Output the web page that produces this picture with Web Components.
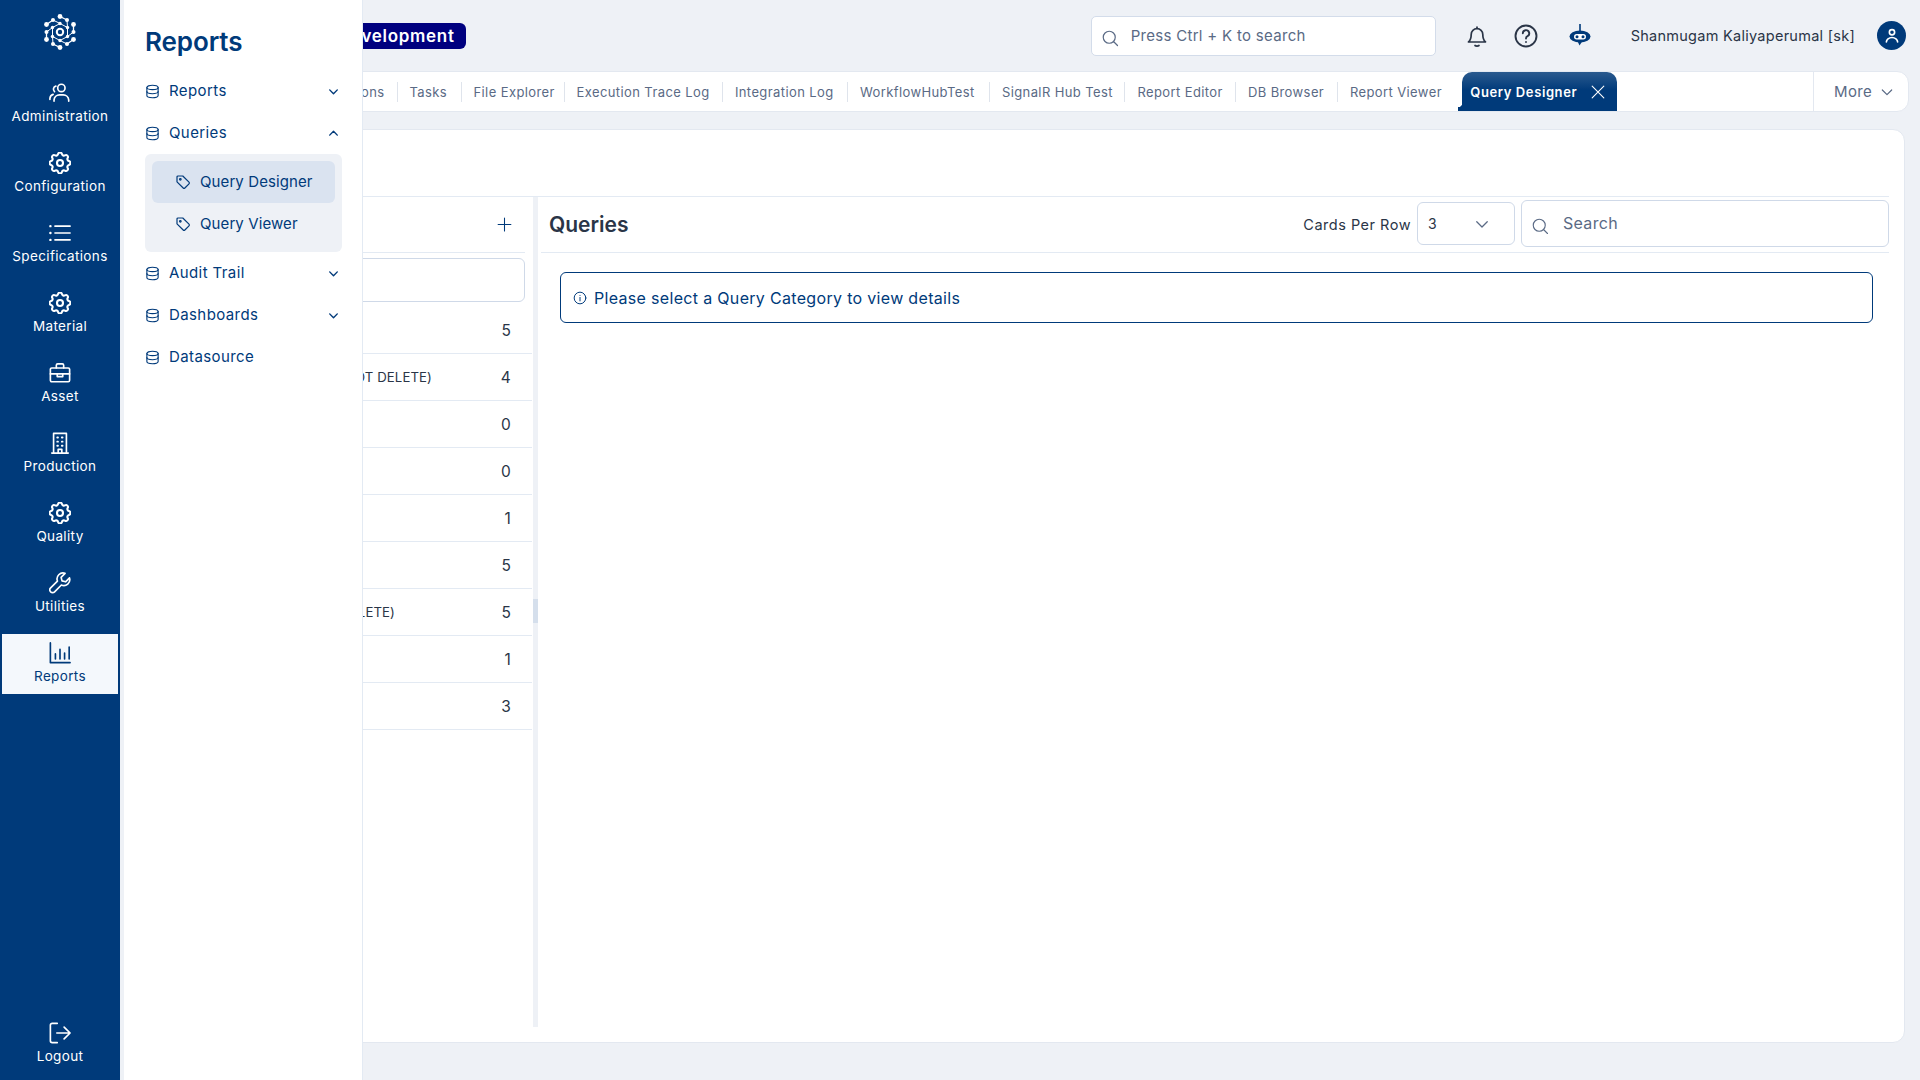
<!DOCTYPE html>
<html>
<head>
<meta charset="utf-8">
<title>Query Designer</title>
<style>
  html, body{ margin: 0; height: 100%; }
  body{
    font-family: Inter, "Noto Sans", sans-serif;
    color: #2a3547;
    background: #eef1f6;
    overflow: hidden;
  }
</style>
</head>
<body>
<app-shell>
  <app-rail slot="rail">
    <rail-item icon="users" label="Administration"></rail-item>
    <rail-item icon="gear" label="Configuration"></rail-item>
    <rail-item icon="list" label="Specifications"></rail-item>
    <rail-item icon="gear" label="Material"></rail-item>
    <rail-item icon="case" label="Asset"></rail-item>
    <rail-item icon="building" label="Production"></rail-item>
    <rail-item icon="gear" label="Quality"></rail-item>
    <rail-item icon="wrench" label="Utilities"></rail-item>
    <rail-item icon="chart" label="Reports" active></rail-item>
    <rail-item slot="bottom" icon="logout" label="Logout"></rail-item>
  </app-rail>

  <fly-menu slot="menu" heading="Reports">
    <menu-row label="Reports" chevron="down"></menu-row>
    <menu-row label="Queries" chevron="up"></menu-row>
    <sub-menu>
      <sub-row label="Query Designer" active></sub-row>
      <sub-row label="Query Viewer"></sub-row>
    </sub-menu>
    <menu-row label="Audit Trail" chevron="down"></menu-row>
    <menu-row label="Dashboards" chevron="down"></menu-row>
    <menu-row label="Datasource"></menu-row>
  </fly-menu>

  <top-bar slot="top"></top-bar>
  <tab-strip slot="tabs"></tab-strip>

  <query-page slot="page">
    <category-panel slot="left"></category-panel>
    <queries-panel slot="right"></queries-panel>
  </query-page>
</app-shell>

<script>
const ICONS = {
  users: '<circle cx="13.500" cy="6.500" r="4"/><path d="M5.500 21v-1.500a6 6 0 0 1 6-5.500h4a6 6 0 0 1 6 5.500V21"/><path d="M7.500 4.500a3.500 3.500 0 0 0-1.500 6"/><path d="M1 19v-1a5 5 0 0 1 3.500-4.500"/>',
  gear: '<path d="M10.325 4.317c.426-1.756 2.924-1.756 3.350 0a1.724 1.724 0 0 0 2.573 1.066c1.543-.94 3.310.826 2.370 2.370a1.724 1.724 0 0 0 1.065 2.572c1.756.426 1.756 2.924 0 3.350a1.724 1.724 0 0 0-1.066 2.573c.94 1.543-.826 3.310-2.370 2.370a1.724 1.724 0 0 0-2.572 1.065c-.426 1.756-2.924 1.756-3.350 0a1.724 1.724 0 0 0-2.573-1.066c-1.543.94-3.310-.826-2.370-2.370a1.724 1.724 0 0 0-1.065-2.572c-1.756-.426-1.756-2.924 0-3.350a1.724 1.724 0 0 0 1.066-2.573c-.94-1.543.826-3.310 2.370-2.370 1 .608 2.296.07 2.572-1.065z"/><circle cx="12" cy="12" r="2.600"/>',
  list: '<path d="M6.500 4.500H23M6.500 12H23M6.500 19.500H23"/><path d="M1.500 4.500h.1M1.500 12h.1M1.500 19.500h.1" stroke-width="2.600"/>',
  case: '<rect x="1.500" y="6.500" width="21" height="15" rx="1.500"/><path d="M8 6.500V3.500A1.500 1.500 0 0 1 9.500 2h5A1.500 1.500 0 0 1 16 3.500V6.500"/><path d="M1.500 13h21M9 13v3h6v-3"/>',
  building: '<path d="M5 23V1.500h14V23M3 23h18M10 23v-4h4v4"/><path d="M9 6h.8M14 6h.8M9 10.500h.8M14 10.500h.8M9 15h.8M14 15h.8" stroke-width="2"/>',
  wrench: '<path d="M22.400 6.400l-4.300 4.300-3.900-1-1-3.900 4.300-4.300a6.500 6.500 0 0 0-8.300 8.400l-7.400 7.400a3 3 0 1 0 4.300 4.300l7.400-7.400a6.500 6.500 0 0 0 8.900-7.800z"/>',
  chart: '<path d="M1.500 1v21.500H23"/><path d="M7 13v5.500M12 8v10.500M17 12v6.500M22 5.500v13"/>',
  logout: '<path d="M9 1.500H3.500a2 2 0 0 0-2 2v17a2 2 0 0 0 2 2H9"/><path d="M8.500 12H23M16.500 5.500L23 12l-6.500 6.500"/>',
  db: '<ellipse cx="12" cy="5.500" rx="9" ry="3.500"/><path d="M3 5.500v13c0 1.900 4 3.500 9 3.500s9-1.600 9-3.500v-13"/><path d="M3 12c0 1.900 4 3.500 9 3.500s9-1.600 9-3.500"/>',
  tag: '<path d="M3 4.500A1.500 1.500 0 0 1 4.500 3h7.200l9.300 9.300a1.800 1.800 0 0 1 0 2.500l-6.200 6.200a1.800 1.800 0 0 1-2.500 0L3 11.700z"/><circle cx="8" cy="8" r="1.200"/>',
  down: '<path d="M5 9l7 7 7-7"/>',
  up: '<path d="M5 15l7-7 7 7"/>',
  search: '<circle cx="11" cy="11" r="8"/><path d="M17 17l5 5"/>',
  bell: '<path d="M3.500 18c1.800-1.600 2.700-3.500 2.700-7.500a5.800 5.800 0 0 1 11.600 0c0 4 .9 5.900 2.700 7.500z"/><path d="M10 21.500c.8.700 3.200.7 4 0"/><path d="M12 3v1"/>',
  help: '<circle cx="12" cy="12" r="10.500"/><path d="M8.800 9.300a3.200 3.200 0 1 1 4.700 2.900c-1 .5-1.500 1.100-1.500 2.300"/><path d="M12 18v.1"/>',
  close: '<path d="M5 5l14 14M19 5L5 19"/>',
  plus: '<path d="M12 3v18M3 12h18"/>',
  info: '<circle cx="12" cy="12" r="10"/><path d="M12 11v6M12 7.500v.1"/>',
};

function icon(name, size, width){
  return `<svg width="${size}" height="${size}" viewBox="${name == 'gear' ? '2.500 2.500 19 19' : '0 0 24 24'}" fill="none" stroke="currentColor"
    stroke-width="${width || 2}" stroke-linecap="round" stroke-linejoin="round" aria-hidden="true">${ICONS[name]}</svg>`;
}

class AppShell extends HTMLElement{
  constructor(){
    super();
    this.attachShadow({ mode: 'open' });
    this.shadowRoot.innerHTML = `
      <style>
        :host{ display: flex; height: 1080px; position: relative; overflow: hidden; }
        #main{ flex: 1; min-width: 0; display: flex; flex-direction: column; padding: 0 11px 0 12px; }
        #menu{ position: absolute; left: 120px; top: 0; bottom: 0; z-index: 5; }
      </style>
      <slot name="rail"></slot>
      <div id="menu"><slot name="menu"></slot></div>
      <div id="main">
        <slot name="top"></slot>
        <slot name="tabs"></slot>
        <slot name="page"></slot>
      </div>
    `;
  }
}

class AppRail extends HTMLElement{
  constructor(){
    super();
    this.attachShadow({ mode: 'open' });
    this.shadowRoot.innerHTML = `
      <style>
        :host{
          display: flex; flex-direction: column; width: 120px; flex: none;
          background: #003a7a; padding: 14px 2px 6px; box-sizing: border-box;
        }
        #logo{ height: 36px; margin-bottom: 24px; display: flex; justify-content: center; }
        #items{ display: flex; flex-direction: column; gap: 10px; flex: 1; }
      </style>
      <div id="logo">
        <svg width="36" height="36" viewBox="0 0 36 36" fill="#fff" stroke="#fff" stroke-width="1">
          <g fill="none">
            <path d="M18 2.500 25 6M31.500 10.500V18M31.500 25.500 25 30M18 33.500 11 30M4.500 25.500V18M4.500 10.500 11 6" stroke-width="1.300"/>
            <path d="M18 9.500 25.500 13.500V22.500L18 26.500 10.500 22.500V13.500Z"/>
            <circle cx="18" cy="18" r="3.200" stroke-width="2"/>
            <path d="M25 6 25.500 13.500M31.500 18 25.500 22.500M25 30 18 26.500M11 30 10.500 22.500M4.500 18 10.500 13.500M11 6 18 9.500"/>
          </g>
          <g stroke="none">
            <circle cx="18" cy="2.500" r="2.400"/><circle cx="25" cy="6" r="2"/><circle cx="31.500" cy="10.500" r="2.400"/>
            <circle cx="31.500" cy="18" r="2"/><circle cx="31.500" cy="25.500" r="2.400"/><circle cx="25" cy="30" r="2"/>
            <circle cx="18" cy="33.500" r="2.400"/><circle cx="11" cy="30" r="2"/><circle cx="4.500" cy="25.500" r="2.400"/>
            <circle cx="4.500" cy="18" r="2"/><circle cx="4.500" cy="10.500" r="2.400"/><circle cx="11" cy="6" r="2"/>
            <circle cx="18" cy="9.500" r="1.700"/><circle cx="25.500" cy="13.500" r="1.700"/><circle cx="25.500" cy="22.500" r="1.700"/>
            <circle cx="18" cy="26.500" r="1.700"/><circle cx="10.500" cy="22.500" r="1.700"/><circle cx="10.500" cy="13.500" r="1.700"/>
          </g>
        </svg>
      </div>
      <div id="items"><slot></slot></div>
      <slot name="bottom"></slot>
    `;
  }
}

class RailItem extends HTMLElement{
  connectedCallback(){
    const root = this.shadowRoot || this.attachShadow({ mode: 'open' });
    root.innerHTML = `
      <style>
        :host{
          display: flex; flex-direction: column; align-items: center; height: 60px;
          padding-top: 8px; box-sizing: border-box; color: #fff;
        }
        :host([active]){ background: #f4f8fc; color: #003a7a; }
        svg{ display: block; }
        span{ font-size: 13.500px; line-height: 18px; margin-top: 3px; letter-spacing: .35px; white-space: nowrap; }
      </style>
      ${icon(this.getAttribute('icon'), 22, 1.800)}
      <span>${this.getAttribute('label')}</span>
    `;
  }
}

class FlyMenu extends HTMLElement{
  connectedCallback(){
    const root = this.shadowRoot || this.attachShadow({ mode: 'open' });
    root.innerHTML = `
      <style>
        :host{
          display: block; height: 100%; width: 243px; box-sizing: border-box;
          background: #fff; border-left: 4px solid #eef1f6; border-right: 1px solid #e3eaf3;
          padding: 0 21px; color: #003a7a;
        }
        h2{ margin: 0; font-size: 26px; line-height: 34px; font-weight: 600; padding: 25px 0 11px; letter-spacing: -.1px; }
        #rows{ display: flex; flex-direction: column; }
      </style>
      <h2>${this.getAttribute('heading')}</h2>
      <div id="rows"><slot></slot></div>
    `;
  }
}

class MenuRow extends HTMLElement{
  connectedCallback(){
    const root = this.shadowRoot || this.attachShadow({ mode: 'open' });
    const chevron = this.getAttribute('chevron');
    root.innerHTML = `
      <style>
        :host{ display: flex; align-items: center; height: 42px; font-size: 15px; letter-spacing: .4px; }
        svg{ flex: none; }
        span{ margin-left: 9px; flex: 1; padding-bottom: 2px; }
        #chev{ display: flex; margin-right: 1px; }
      </style>
      ${icon('db', 15, 1.800)}
      <span>${this.getAttribute('label')}</span>
      <div id="chev">${chevron ? icon(chevron, 13, 2.600) : ''}</div>
    `;
  }
}

class SubMenu extends HTMLElement{
  constructor(){
    super();
    this.attachShadow({ mode: 'open' });
    this.shadowRoot.innerHTML = `
      <style>
        :host{
          display: flex; flex-direction: column; background: #eef1f6; border-radius: 6px;
          padding: 7px; margin: 0 -1px 0 0;
        }
      </style>
      <slot></slot>
    `;
  }
}

class SubRow extends HTMLElement{
  connectedCallback(){
    const root = this.shadowRoot || this.attachShadow({ mode: 'open' });
    root.innerHTML = `
      <style>
        :host{
          display: flex; align-items: center; height: 42px; padding-left: 23px;
          font-size: 15px; letter-spacing: .1px; border-radius: 6px;
        }
        :host([active]){ background: #dae3f0; }
        span{ margin-left: 9px; padding-bottom: 2px; }
      </style>
      ${icon('tag', 16, 1.800)}
      <span>${this.getAttribute('label')}</span>
    `;
  }
}

class TopBar extends HTMLElement{
  constructor(){
    super();
    this.attachShadow({ mode: 'open' });
    this.shadowRoot.innerHTML = `
      <style>
        :host{ display: flex; align-items: center; height: 71px; flex: none; box-sizing: border-box; padding-right: 3px; }
        #badge{
          margin-left: 195px; height: 26px; line-height: 26px; padding: 0 11px; border-radius: 6px;
          background: #00007f; color: #fff; font-weight: 600; font-size: 17px; letter-spacing: .7px; white-space: nowrap;
        }
        #search{
          margin-left: auto; width: 345px; height: 40px; box-sizing: border-box; display: flex; align-items: center;
          background: #fff; border: 1px solid #d3dcea; border-radius: 5px; padding: 0 9px; color: #5a6a85;
          font-size: 15px; letter-spacing: .3px;
        }
        #search span{ margin-left: 12px; }
        #search svg{ margin-top: 4px; }
        .ic{ display: flex; color: #2a3547; }
        #name{ font-size: 14.500px; letter-spacing: .27px; color: #2a3547; margin: 0 22px 0 39px; white-space: nowrap; }
        #avatar{
          width: 29px; height: 29px; border-radius: 50%; background: #003a7a; color: #fff;
          display: flex; align-items: center; justify-content: center;
        }
      </style>
      <div id="badge">Development</div>
      <div id="search">${icon('search', 18, 1.600)}<span>Press Ctrl + K to search</span></div>
      <div class="ic" style="margin-left:29px">${icon('bell', 24, 1.700)}</div>
      <div class="ic" style="margin-left:25px">${icon('help', 24, 1.900)}</div>
      <div class="ic" style="margin-left:30px; color:#003a7a">
        <svg width="24" height="24" viewBox="0 0 24 24" fill="currentColor">
          <rect x="11.200" y="0" width="1.600" height="8"/>
          <ellipse cx="12" cy="12.500" rx="10.500" ry="6"/>
          <path d="M9.500 17h5l-3 4.500z"/>
          <rect x="6" y="10" width="12" height="5.500" rx="2.700" fill="#fff"/>
          <circle cx="9" cy="12.700" r="1.500"/><circle cx="15" cy="12.700" r="1.500"/>
        </svg>
      </div>
      <div id="name">Shanmugam Kaliyaperumal [sk]</div>
      <div id="avatar">
        <svg width="18" height="18" viewBox="0 0 24 24" fill="none" stroke="currentColor" stroke-width="2.200" stroke-linecap="round">
          <circle cx="12" cy="7" r="3.500"/><path d="M4.500 20a7.500 6 0 0 1 15 0"/>
        </svg>
      </div>
    `;
  }
}

const TABS = [
  ['Notifications', 130], ['Tasks', 64], ['File Explorer', 103], ['Execution Trace Log', 158.400],
  ['Integration Log', 125], ['WorkflowHubTest', 142], ['SignalR Hub Test', 135.500],
  ['Report Editor', 110.500], ['DB Browser', 102], ['Report Viewer', 124.400],
];

class TabStrip extends HTMLElement{
  constructor(){
    super();
    this.attachShadow({ mode: 'open' });
    const cells = TABS.map(t => `<div class="tab" style="width:${t[1]}px"><span>${t[0]}</span></div>`).join('');
    this.shadowRoot.innerHTML = `
      <style>
        :host{
          display: flex; align-items: stretch; height: 41px; flex: none; box-sizing: border-box;
          background: #fff; border: 1px solid #e3e8f0; border-radius: 12px;
          color: #5a6a85; font-size: 13px; letter-spacing: .4px; overflow: hidden;
        }
        #list{ display: flex; flex: none; align-items: center; padding-left: 134.500px; min-width: 0; }
        .tab{ box-sizing: border-box; height: 20px; line-height: 20px; padding-left: 12px; border-right: 1px solid #dfe4ec; white-space: nowrap; flex: none; }
        .tab:first-child{ padding: 0 12px 0 0; text-align: right; }
        .tab:last-child{ border-right: 0; }
        #active{
          flex: none; width: 155px; height: 40px; box-sizing: border-box; border-radius: 10px 10px 0 0; position: relative;
          background: linear-gradient(#2a5a8e, #003a7a 45%); color: #fff; font-weight: 600;
          display: flex; align-items: center; justify-content: space-between; padding: 0 9px 0 8px; font-size: 13px; letter-spacing: .6px;
        }
        #active::before{
          content: ''; position: absolute; left: -4px; bottom: 0; width: 4px; height: 9px;
          background: radial-gradient(circle at 0 0, transparent 4px, #003a7a 4.500px);
        }
        #more{
          margin-left: auto; flex: none; width: 95px; box-sizing: border-box; border-left: 1px solid #e3e8f0; padding-left: 7px;
          display: flex; align-items: center; justify-content: center; gap: 7px; font-size: 15px; letter-spacing: .3px;
        }
      </style>
      <div id="list">${cells}</div>
      <div id="active"><span>Query Designer</span>${icon('close', 20, 1.300)}</div>
      <div id="more"><span>More</span>${icon('down', 16, 1.800)}</div>
    `;
  }
}

class QueryPage extends HTMLElement{
  constructor(){
    super();
    this.attachShadow({ mode: 'open' });
    this.shadowRoot.innerHTML = `
      <style>
        :host{
          display: block; height: 914px; margin: 17px 4px 0 0; flex: none; box-sizing: border-box;
          background: #fff; border: 1px solid #e3e8f0; border-radius: 12px; padding: 66px 15px 15px;
        }
        #split{ display: flex; height: 100%; border-top: 1px solid #e3eaf3; box-sizing: border-box; }
      </style>
      <div id="split"><slot name="left"></slot><slot name="right"></slot></div>
    `;
  }
}

// the first part of each name lies under the fly-out menu
const CATEGORIES = [
  ['', 5], ['(DO NOT DELETE)', 4, 284], ['', 0], ['', 0], ['', 1],
  ['', 5], ['(DO NOT DELETE)', 5, 247], ['', 1], ['', 3],
];

class CategoryPanel extends HTMLElement{
  constructor(){
    super();
    this.attachShadow({ mode: 'open' });
    const rows = CATEGORIES.map(c => `
      <div class="row"><span class="name" style="width:${c[2] || 0}px">${c[0]}</span><span class="num">${c[1]}</span></div>`).join('');
    this.shadowRoot.innerHTML = `
      <style>
        :host{ display: flex; flex: none; width: 389px; position: relative; }
        #col{ width: 384px; flex: none; display: flex; flex-direction: column; }
        #head{ height: 56px; flex: none; box-sizing: border-box; margin-right: 7px; border-bottom: 1px solid #e3eaf3;
          display: flex; align-items: center; justify-content: flex-end; padding-right: 12px; color: #003a7a; }
        #find{ height: 44px; flex: none; box-sizing: border-box; margin: 5px 7px 5px 0; border: 1px solid #cfd9e8; border-radius: 6px; }
        .row{ height: 47px; flex: none; box-sizing: border-box; border-bottom: 1px solid #e3eaf3;
          display: flex; align-items: center; justify-content: space-between; padding-right: 21px;
          font-size: 15.500px; letter-spacing: .2px; color: #2a3547; white-space: nowrap; }
        .name{ text-align: right; font-size: 13.200px; letter-spacing: .1px; }
        #bar{ width: 5px; flex: none; background: #eef1f6; position: relative; margin-left: 1px; }
        #thumb{ position: absolute; top: 402px; left: 0; right: 0; height: 24px; background: #d5dfec; }
      </style>
      <div id="col">
        <div id="head">${icon('plus', 17, 1.500)}</div>
        <div id="find"></div>
        ${rows}
      </div>
      <div id="bar"><div id="thumb"></div></div>
    `;
  }
}

class QueriesPanel extends HTMLElement{
  constructor(){
    super();
    this.attachShadow({ mode: 'open' });
    this.shadowRoot.innerHTML = `
      <style>
        :host{ display: block; flex: 1; min-width: 0; padding-left: 4px; }
        #head{ height: 56px; box-sizing: border-box; border-bottom: 1px solid #e3eaf3; display: flex; align-items: center; padding-left: 8px; }
        h3{ margin: 0; font-size: 21px; font-weight: 600; color: #2a3547; flex: 1; }
        #cards{ font-size: 14.500px; letter-spacing: .5px; color: #2a3547; margin-right: 6px; white-space: nowrap; }
        #select{
          width: 98px; height: 43px; box-sizing: border-box; border: 1px solid #cfd9e8; border-radius: 6px; margin-bottom: 2px;
          display: flex; align-items: center; justify-content: space-between; padding: 0 23px 0 10px; font-size: 14px; color: #2a3547;
        }
        #select svg{ color: #5a6a85; }
        #search{
          width: 368px; height: 47px; box-sizing: border-box; border: 1px solid #cfd9e8; border-radius: 6px; margin: 0 0 2px 6px;
          display: flex; align-items: center; padding: 0 9px; font-size: 16px; letter-spacing: .3px; color: #5a6a85;
        }
        #search svg{ margin-top: 4px; }
        #search span{ margin-left: 14px; padding-bottom: 1px; }
        #alert{
          margin: 19px 16px 0 19px; height: 51px; box-sizing: border-box; border: 1px solid #003a7a; border-radius: 6px;
          display: flex; align-items: center; padding-left: 12px; color: #003a7a; font-size: 16px; letter-spacing: .32px;
        }
        #alert span{ margin-left: 7px; }
      </style>
      <div id="head">
        <h3>Queries</h3>
        <div id="cards">Cards Per Row</div>
        <div id="select"><span>3</span>${icon('down', 18, 1.700)}</div>
        <div id="search">${icon('search', 18, 1.500)}<span>Search</span></div>
      </div>
      <div id="alert">${icon('info', 14, 1.700)}<span>Please select a Query Category to view details</span></div>
    `;
  }
}

customElements.define('app-shell', AppShell);
customElements.define('app-rail', AppRail);
customElements.define('rail-item', RailItem);
customElements.define('fly-menu', FlyMenu);
customElements.define('menu-row', MenuRow);
customElements.define('sub-menu', SubMenu);
customElements.define('sub-row', SubRow);
customElements.define('top-bar', TopBar);
customElements.define('tab-strip', TabStrip);
customElements.define('query-page', QueryPage);
customElements.define('category-panel', CategoryPanel);
customElements.define('queries-panel', QueriesPanel);
</script>
</body>
</html>
